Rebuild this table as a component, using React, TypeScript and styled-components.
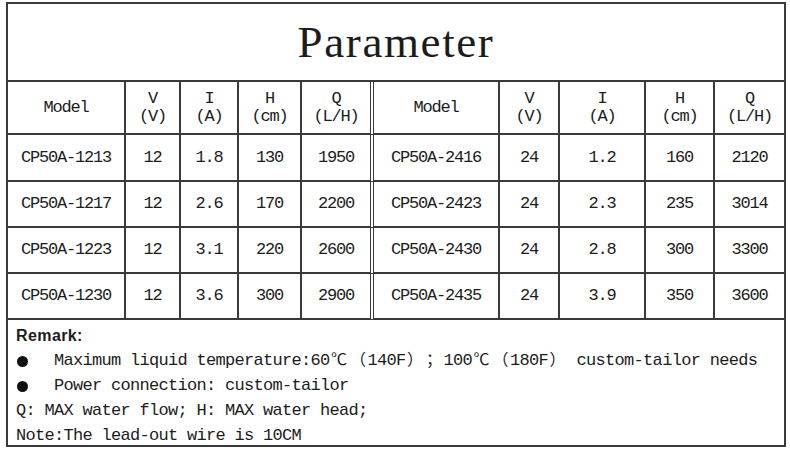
import React from "react";
import styled, { createGlobalStyle } from "styled-components";

const LINE = "#3a3a3a";

const Global = createGlobalStyle`
  html, body { margin: 0; padding: 0; background: #fff; }
  body { padding: 2px 0 0 6px; }
`;

const Frame = styled.div`
  box-sizing: border-box;
  width: 780px;
  height: 445px;
  border: 2px solid ${LINE};
  display: flex;
  flex-direction: column;
  color: #1c1c1c;
  background: #fff;
`;

const Title = styled.h1`
  margin: 0;
  box-sizing: border-box;
  height: 78px;
  border-bottom: 2px solid ${LINE};
  font: 400 45px/76px "Liberation Serif", serif;
  letter-spacing: 1.6px;
  text-align: center;
`;

const Grid = styled.div`
  display: grid;
  grid-template-columns: 118px 55px 58px 63px 72px 126px 60px 86px 69px 69px;
  grid-template-rows: 53px 47px 46px 46px 46px;
  font-family: "Liberation Mono", monospace;
  font-size: 17px;
  letter-spacing: -1.2px;
`;

const Cell = styled.div<{ $edge?: "last" | "split" }>`
  box-sizing: border-box;
  display: flex;
  flex-direction: column;
  align-items: center;
  justify-content: center;
  text-align: center;
  line-height: 18px;
  border-bottom: 2px solid ${LINE};
  border-right: ${(p) =>
    p.$edge === "last" ? "none" : p.$edge === "split" ? `4px double ${LINE}` : `2px solid ${LINE}`};
`;

const Remarks = styled.div`
  flex: 1;
  padding: 3px 0 0 8px;
  font-family: "Liberation Mono", monospace;
  font-size: 17px;
  line-height: 25px;
  letter-spacing: -0.7px;
`;

const RemarkTitle = styled.div`
  font: 700 16px/25px "Liberation Sans", Arial, sans-serif;
  letter-spacing: 0.4px;
`;

const Line = styled.div`
  display: flex;
  align-items: center;
  height: 25px;
  white-space: pre;
`;

const Bullet = styled.span`
  flex: none;
  width: 11px;
  height: 11px;
  border-radius: 50%;
  background: #111;
  margin: 1px 26px 0 1px;
`;

const Text = styled.span`
  white-space: pre;
`;

const Wide = styled.span`
  display: inline-block;
  width: 19px;
  text-align: center;
  letter-spacing: 0;
  line-height: 17px;
  font-family: "Noto Sans CJK SC", sans-serif;
  font-size: 16px;
`;

type Row = [string, string, string, string, string];

const left: Row[] = [
  ["CP50A-1213", "12", "1.8", "130", "1950"],
  ["CP50A-1217", "12", "2.6", "170", "2200"],
  ["CP50A-1223", "12", "3.1", "220", "2600"],
  ["CP50A-1230", "12", "3.6", "300", "2900"],
];

const right: Row[] = [
  ["CP50A-2416", "24", "1.2", "160", "2120"],
  ["CP50A-2423", "24", "2.3", "235", "3014"],
  ["CP50A-2430", "24", "2.8", "300", "3300"],
  ["CP50A-2435", "24", "3.9", "350", "3600"],
];

const headers: string[][] = [["Model"], ["V", "(V)"], ["I", "(A)"], ["H", "(cm)"], ["Q", "(L/H)"]];

const edgeFor = (i: number): "last" | "split" | undefined =>
  i === 4 ? "split" : i === 9 ? "last" : undefined;

export default function App() {
  const headCells = [...headers, ...headers];
  return (
    <>
      <Global />
      <Frame>
        <Title>Parameter</Title>
        <Grid>
          {headCells.map((h, i) => (
            <Cell key={`h${i}`} $edge={edgeFor(i)}>
              {h.map((t) => (
                <span key={t}>{t}</span>
              ))}
            </Cell>
          ))}
          {left.map((row, r) =>
            [...row, ...right[r]].map((v, i) => (
              <Cell key={`${r}-${i}`} $edge={edgeFor(i)}>
                {v}
              </Cell>
            ))
          )}
        </Grid>
        <Remarks>
          <RemarkTitle>Remark:</RemarkTitle>
          <Line>
            <Bullet />
            <Text>
              Maximum liquid temperature:60<Wide>℃</Wide>
              <Wide>（</Wide>140F<Wide>）</Wide>
              <Wide>；</Wide>100<Wide>℃</Wide>
              <Wide>（</Wide>180F<Wide>）</Wide> custom-tailor needs
            </Text>
          </Line>
          <Line>
            <Bullet />
            <Text>Power connection: custom-tailor</Text>
          </Line>
          <Line>
            <Text>Q: MAX water flow; H: MAX water head;</Text>
          </Line>
          <Line>
            <Text>Note:The lead-out wire is 10CM</Text>
          </Line>
        </Remarks>
      </Frame>
    </>
  );
}
